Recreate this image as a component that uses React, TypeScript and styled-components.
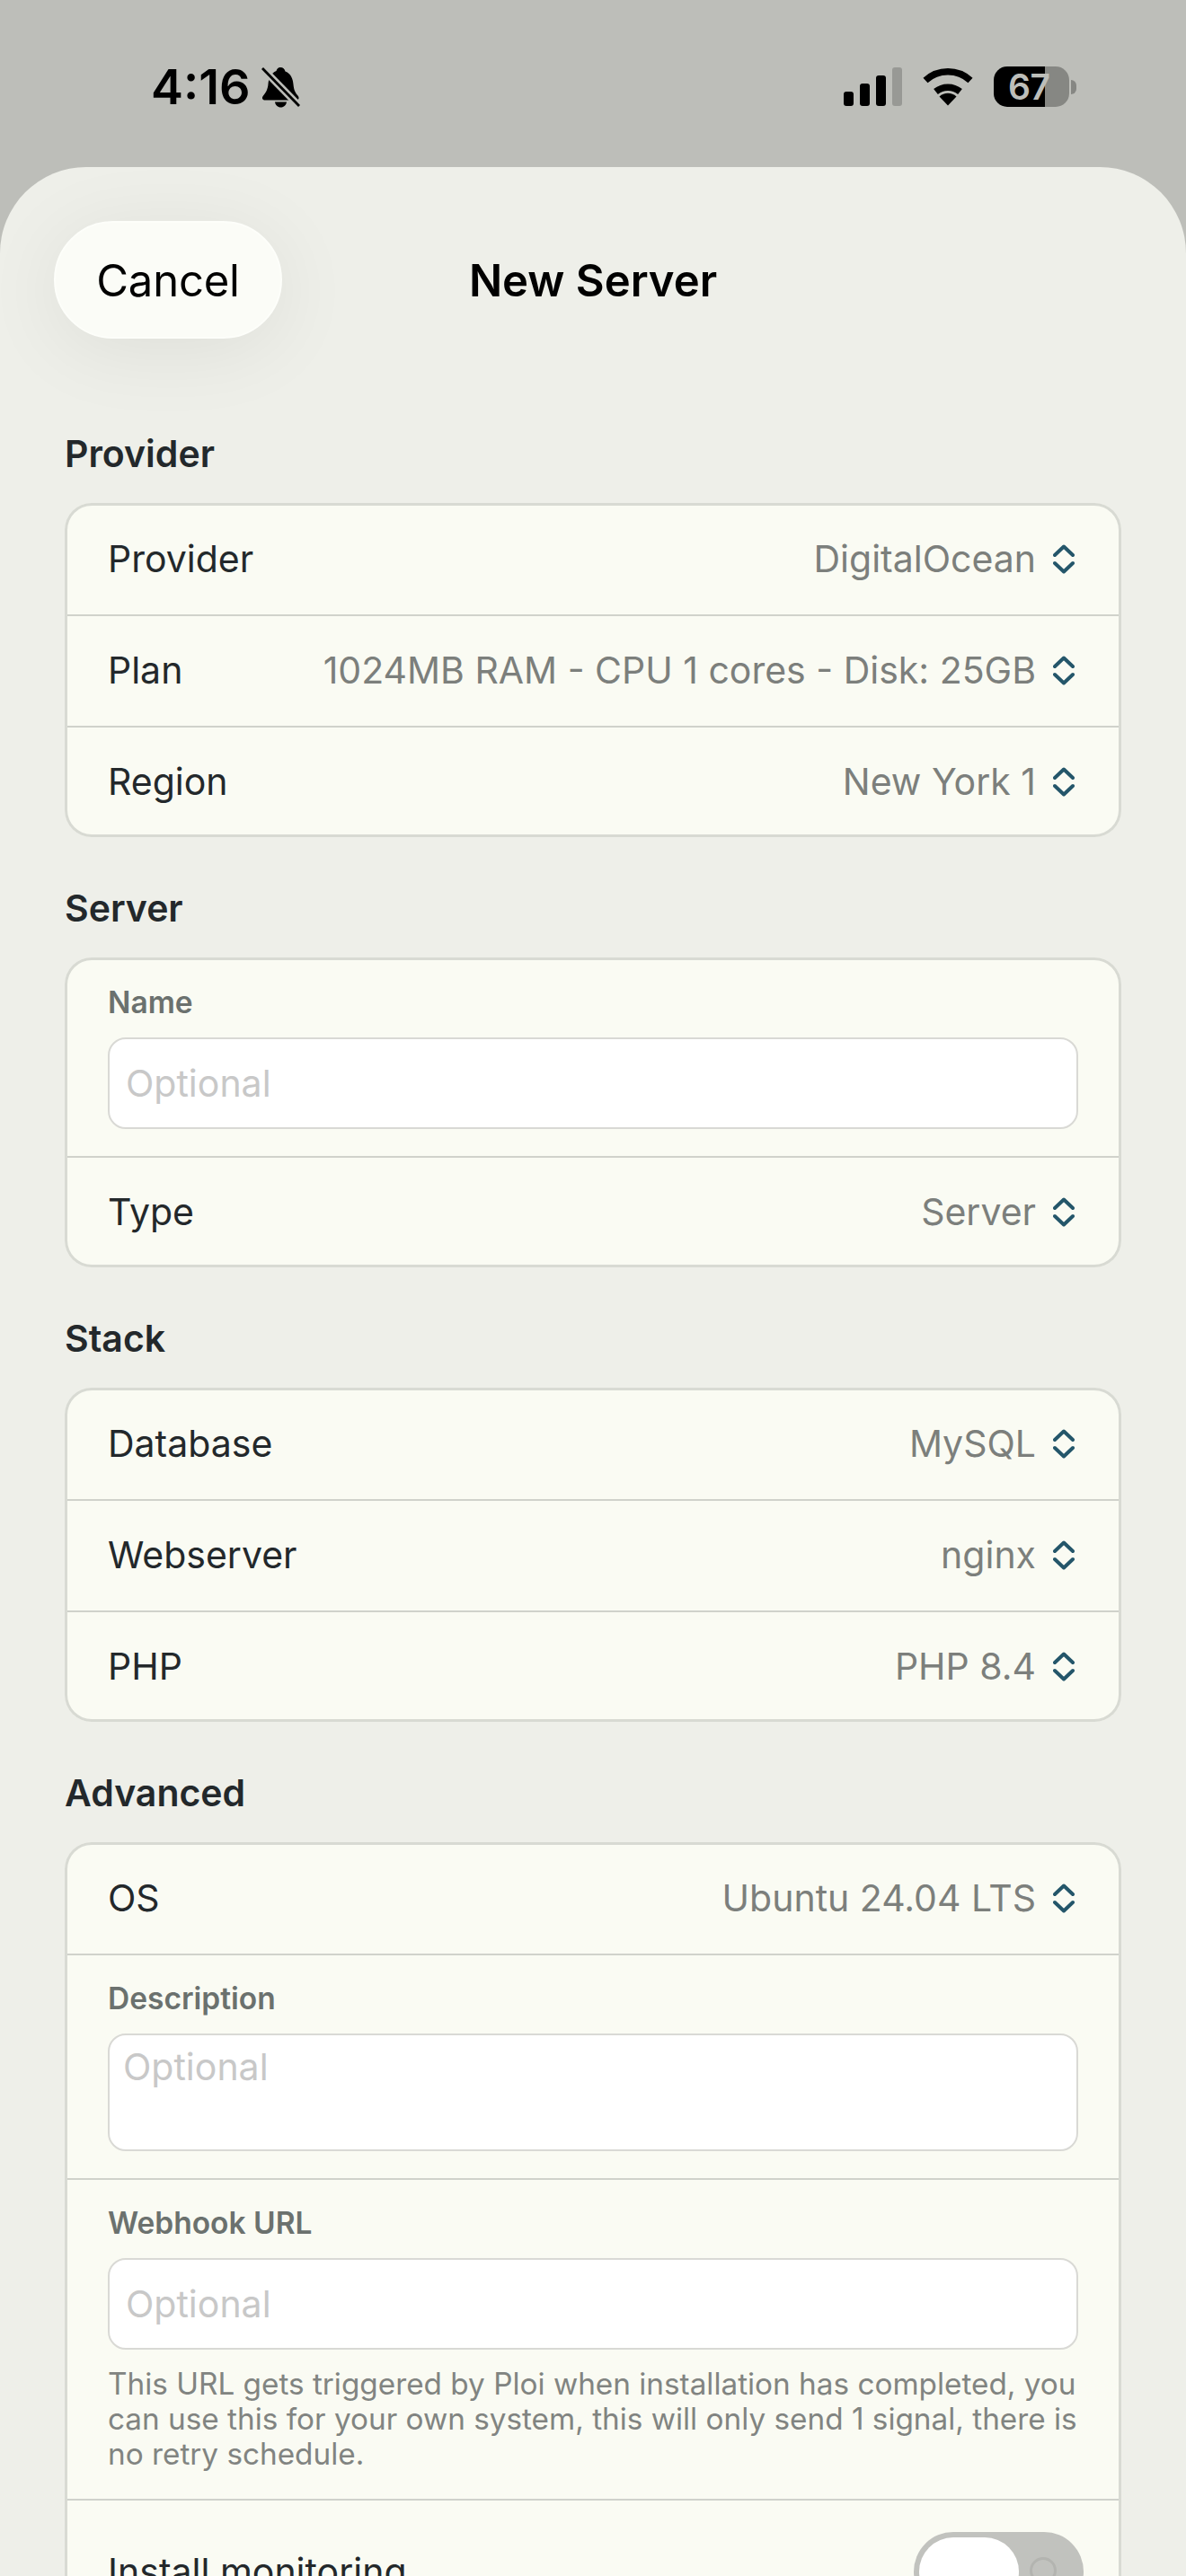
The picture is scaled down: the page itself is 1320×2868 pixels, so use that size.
import React from 'react';
import styled, { createGlobalStyle } from 'styled-components';

const GlobalStyle = createGlobalStyle`
  html, body {
    margin: 0;
    padding: 0;
    background: #bdbeb9;
  }

  * {
    box-sizing: border-box;
  }
`;

const Chevrons = () => (
  <ChevronIcon viewBox="0 0 24 33" aria-hidden="true">
    <path d="M2 12 L12 2.500 L22 12 M2 21 L12 30.500 L22 21" />
  </ChevronIcon>
);

const BellSlash = () => (
  <svg width="43" height="46" viewBox="0 0 43 46" aria-hidden="true">
    <path
      d="M21 1c3 0 5 2 5.500 4.500C33 8 35 14 35.500 20c.5 6 2 9 5 12.500 2 2.500 1 5-2 5H4c-3 0-4-2.500-2-5 3-3.500 5-7 5.500-13 .5-6 3-12 9-14.500C17 3 18.500 1 21 1z"
      fill="#000"
    />
    <path d="M15 39.500h13c-.5 3.500-3 6-6.500 6s-6-2.500-6.500-6z" fill="#000" />
    <path d="M1 2 L42 44" stroke="#bdbeb9" strokeWidth="8" />
    <path d="M1 2 L42 44" stroke="#000" strokeWidth="2.800" />
  </svg>
);

const Wifi = () => (
  <svg width="58" height="43" viewBox="0 0 58 43" aria-hidden="true">
    <path d="M29 42.500 L19.500 32.500 A14 14 0 0 1 38.500 32.500 Z" fill="#000" />
    <path d="M15.500 27 A21.500 21.500 0 0 1 42.500 27" fill="none" stroke="#000" strokeWidth="7.500" />
    <path d="M4 14.500 A37 37 0 0 1 54 14.500" fill="none" stroke="#000" strokeWidth="7.500" />
  </svg>
);

const Toggle = () => (
  <ToggleTrack>
    <ToggleThumb />
    <ToggleOffMark />
  </ToggleTrack>
);

const SelectRow = ({ label, value }: { label: string; value: string }) => (
  <Row>
    <RowLabel>{label}</RowLabel>
    <RowValue>
      {value}
      <Chevrons />
    </RowValue>
  </Row>
);

const App = () => (
  <Page>
    <GlobalStyle />
    <StatusBar>
      <StatusLeft>
        <Time>4:16</Time>
        <BellSlash />
      </StatusLeft>
      <StatusRight>
        <Signal>
          <SignalBar level={1} />
          <SignalBar level={2} />
          <SignalBar level={3} />
          <SignalBar level={4} dim />
        </Signal>
        <Wifi />
        <Battery>
          <BatteryBody>67</BatteryBody>
          <BatteryNub />
        </Battery>
      </StatusRight>
    </StatusBar>

    <Sheet>
      <Header>
        <CancelButton>Cancel</CancelButton>
        <Title>New Server</Title>
      </Header>

      <Section>
        <SectionLabel>Provider</SectionLabel>
        <Card>
          <SelectRow label="Provider" value="DigitalOcean" />
          <SelectRow label="Plan" value="1024MB RAM - CPU 1 cores - Disk: 25GB" />
          <SelectRow label="Region" value="New York 1" />
        </Card>
      </Section>

      <Section>
        <SectionLabel>Server</SectionLabel>
        <Card>
          <Field>
            <FieldLabel>Name</FieldLabel>
            <TextInput placeholder="Optional" />
          </Field>
          <SelectRow label="Type" value="Server" />
        </Card>
      </Section>

      <Section>
        <SectionLabel>Stack</SectionLabel>
        <Card>
          <SelectRow label="Database" value="MySQL" />
          <SelectRow label="Webserver" value="nginx" />
          <SelectRow label="PHP" value="PHP 8.4" />
        </Card>
      </Section>

      <Section>
        <SectionLabel>Advanced</SectionLabel>
        <Card>
          <SelectRow label="OS" value="Ubuntu 24.04 LTS" />
          <Field>
            <FieldLabel>Description</FieldLabel>
            <TextArea placeholder="Optional" />
          </Field>
          <Field>
            <FieldLabel>Webhook URL</FieldLabel>
            <TextInput placeholder="Optional" />
            <HelpText>
              This URL gets triggered by Ploi when installation has completed, you can use this
              for your own system, this will only send 1 signal, there is no retry schedule.
            </HelpText>
          </Field>
          <ToggleRow>
            <RowLabel>Install monitoring</RowLabel>
            <Toggle />
          </ToggleRow>
        </Card>
      </Section>
    </Sheet>
  </Page>
);

const Page = styled.div`
  width: 1320px;
  height: 2868px;
  overflow: hidden;
  background: #bdbeb9;
  font-family: Inter, 'Liberation Sans', sans-serif;
`;

const StatusBar = styled.div`
  height: 186px;
  padding: 74px 122px 0 168px;
  display: flex;
  align-items: flex-start;
  justify-content: space-between;
`;

const StatusLeft = styled.div`
  display: flex;
  align-items: center;
  gap: 12px;
`;

const Time = styled.span`
  font-size: 54px;
  line-height: 46px;
  font-weight: 600;
  color: #000;
`;

const StatusRight = styled.div`
  display: flex;
  align-items: center;
  gap: 22px;
`;

const Signal = styled.div`
  display: flex;
  align-items: flex-end;
  gap: 7px;
  height: 43px;
`;

const SignalBar = styled.div<{ level: number; dim?: boolean }>`
  width: 11px;
  height: ${({ level }) => 7 + level * 9}px;
  border-radius: 3px;
  background: ${({ dim }) => (dim ? '#989995' : '#000')};
`;

const Battery = styled.div`
  display: flex;
  align-items: center;
  gap: 2px;
`;

const BatteryBody = styled.div`
  width: 84px;
  height: 45px;
  border-radius: 15px;
  padding-left: 16px;
  background: linear-gradient(90deg, #000 68%, #868783 68%);
  color: #bdbeb9;
  font-size: 39px;
  line-height: 45px;
  font-weight: 600;
  letter-spacing: -0.5px;
`;

const BatteryNub = styled.div`
  width: 6px;
  height: 16px;
  border-radius: 0 6px 6px 0;
  background: #868783;
`;

const Sheet = styled.div`
  height: 2682px;
  padding: 60px 72px 0;
  background: #eeefe9;
  border-radius: 96px 96px 0 0;
  overflow: hidden;
`;

const Header = styled.div`
  position: relative;
  display: flex;
  align-items: center;
  justify-content: center;
  height: 131px;
  margin-bottom: 103px;
`;

const CancelButton = styled.div`
  position: absolute;
  left: -12px;
  top: 0;
  width: 254px;
  height: 131px;
  padding-top: 2px;
  display: flex;
  align-items: center;
  justify-content: center;
  border: 2px solid #fdfefa;
  border-radius: 66px;
  background: #fbfcf7;
  box-shadow: 0 12px 90px rgba(0, 0, 0, 0.07);
  font-size: 49px;
  letter-spacing: -0.2px;
  color: #000;
`;

const Title = styled.div`
  padding-top: 2px;
  font-size: 49px;
  font-weight: 600;
  color: #000;
`;

const Section = styled.section`
  margin-bottom: 54px;
`;

const SectionLabel = styled.div`
  height: 50px;
  margin-bottom: 30px;
  font-size: 41px;
  line-height: 50px;
  font-weight: 600;
  color: #23282b;
`;

const Card = styled.div`
  padding: 0 3px;
  border-radius: 30px;
  background: #fafbf3;
  box-shadow: inset 0 0 0 3px #d8dad3;
  overflow: hidden;

  & > * + * {
    box-shadow: inset 0 2px 0 #d0d2cb;
  }
`;

const Row = styled.div`
  height: 124px;
  padding: 0 49px 0 45px;
  display: flex;
  align-items: center;
  justify-content: space-between;
`;

const RowLabel = styled.span`
  font-size: 41px;
  color: #23282b;
`;

const RowValue = styled.span`
  display: flex;
  align-items: center;
  gap: 19px;
  font-size: 41px;
  color: #7c7f7c;
`;

const ChevronIcon = styled.svg`
  width: 24px;
  height: 33px;
  flex: none;
  fill: none;
  stroke: #24566a;
  stroke-width: 4;
  stroke-linecap: round;
  stroke-linejoin: round;
`;

const Field = styled.div`
  padding: 30px 45px;
`;

const FieldLabel = styled.div`
  height: 40px;
  margin-bottom: 19px;
  font-size: 33.500px;
  line-height: 40px;
  font-weight: 600;
  color: #6b716e;
`;

const TextInput = styled.input`
  display: block;
  width: 100%;
  height: 102px;
  padding: 0 18px;
  border: 2px solid #d9d9d5;
  border-radius: 20px;
  outline: none;
  background: #fff;
  font-family: inherit;
  font-size: 41px;

  &::placeholder {
    color: #c8c8c8;
    opacity: 1;
  }
`;

const TextArea = styled.textarea`
  display: block;
  width: 100%;
  height: 131px;
  padding: 11px 15px;
  border: 2px solid #d9d9d5;
  border-radius: 20px;
  outline: none;
  resize: none;
  background: #fff;
  font-family: inherit;
  font-size: 41px;
  line-height: 48px;

  &::placeholder {
    color: #c8c8c8;
    opacity: 1;
  }
`;

const HelpText = styled.p`
  margin: 19px 0 0;
  font-size: 33.300px;
  line-height: 39px;
  color: #818481;
`;

const ToggleRow = styled.div`
  padding: 37px 39px 37px 45px;
  display: flex;
  align-items: center;
  justify-content: space-between;
`;

const ToggleTrack = styled.div`
  position: relative;
  width: 189px;
  height: 88px;
  padding: 6px;
  border-radius: 44px;
  background: #c1c2be;
`;

const ToggleThumb = styled.div`
  width: 111px;
  height: 76px;
  border-radius: 38px;
  background: #fff;
`;

const ToggleOffMark = styled.div`
  position: absolute;
  right: 30px;
  top: 28px;
  width: 30px;
  height: 30px;
  border: 3px solid #b3b4b0;
  border-radius: 50%;
`;

export default App;
